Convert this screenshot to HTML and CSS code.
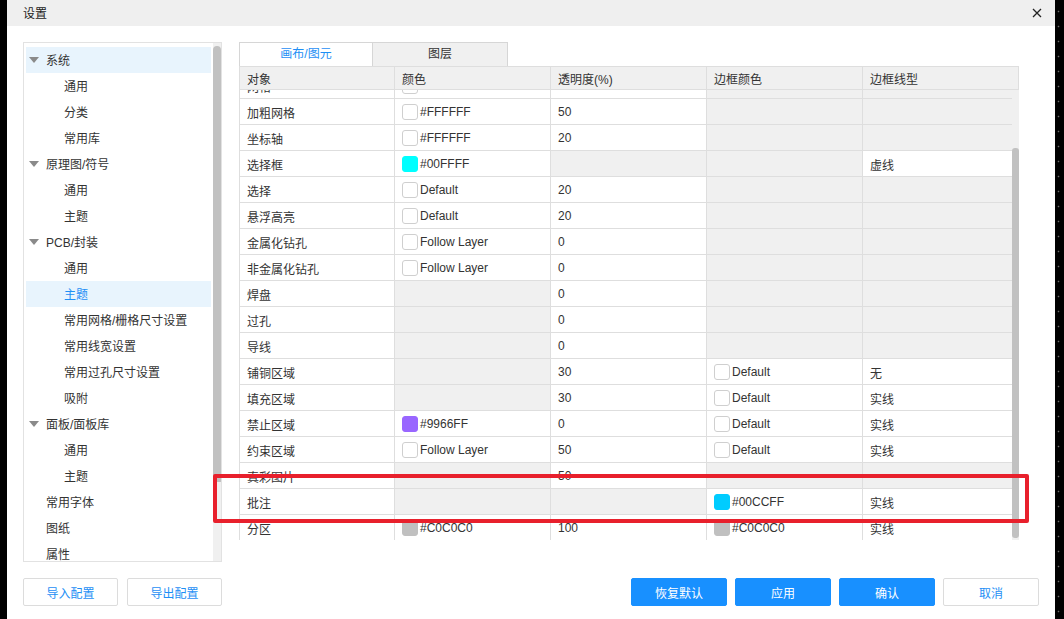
FILE: index.html
```html
<!DOCTYPE html>
<html lang="zh">
<head>
<meta charset="utf-8">
<title>设置</title>
<link rel="stylesheet" href="styles.css">
</head>
<body>
<div class="screen">
  <div class="dialog">
    <div class="titlebar">
      <span class="title">设置</span>
      <svg class="close" width="10" height="10" viewBox="0 0 10 10"><path d="M1 1L9 9M9 1L1 9" stroke="#222" stroke-width="1.3" fill="none"/></svg>
    </div>
    <div class="content">
      <div class="main">
        <div class="tree-panel">
          <div class="tree">
            <div class="node parent hover"><span class="tri"></span>系统</div>
            <div class="node child">通用</div>
            <div class="node child">分类</div>
            <div class="node child">常用库</div>
            <div class="node parent"><span class="tri"></span>原理图/符号</div>
            <div class="node child">通用</div>
            <div class="node child">主题</div>
            <div class="node parent"><span class="tri"></span>PCB/封装</div>
            <div class="node child">通用</div>
            <div class="node child selected">主题</div>
            <div class="node child">常用网格/栅格尺寸设置</div>
            <div class="node child">常用线宽设置</div>
            <div class="node child">常用过孔尺寸设置</div>
            <div class="node child">吸附</div>
            <div class="node parent"><span class="tri"></span>面板/面板库</div>
            <div class="node child">通用</div>
            <div class="node child">主题</div>
            <div class="node leaf">常用字体</div>
            <div class="node leaf">图纸</div>
            <div class="node leaf">属性</div>
          </div>
          <div class="vscroll tree-scroll"><div class="thumb"></div></div>
        </div>
        <div class="right">
          <div class="tabs">
            <div class="tab active">画布/图元</div>
            <div class="tab">图层</div>
          </div>
          <div class="grid">
            <div class="head row">
              <div class="cell">对象</div>
              <div class="cell">颜色</div>
              <div class="cell">透明度(%)</div>
              <div class="cell">边框颜色</div>
              <div class="cell">边框线型</div>
            </div>
            <div class="body">
              <div class="rows">
                <div class="inner">
                  <div class="row"><div class="cell">网格</div><div class="cell"><span class="sw"></span>#FFFFFF</div><div class="cell">70</div><div class="cell off"></div><div class="cell off"></div></div>
                  <div class="row"><div class="cell">加粗网格</div><div class="cell"><span class="sw"></span>#FFFFFF</div><div class="cell">50</div><div class="cell off"></div><div class="cell off"></div></div>
                  <div class="row"><div class="cell">坐标轴</div><div class="cell"><span class="sw"></span>#FFFFFF</div><div class="cell">20</div><div class="cell off"></div><div class="cell off"></div></div>
                  <div class="row"><div class="cell">选择框</div><div class="cell"><span class="sw cyan"></span>#00FFFF</div><div class="cell off"></div><div class="cell off"></div><div class="cell">虚线</div></div>
                  <div class="row"><div class="cell">选择</div><div class="cell"><span class="sw"></span>Default</div><div class="cell">20</div><div class="cell off"></div><div class="cell off"></div></div>
                  <div class="row"><div class="cell">悬浮高亮</div><div class="cell"><span class="sw"></span>Default</div><div class="cell">20</div><div class="cell off"></div><div class="cell off"></div></div>
                  <div class="row"><div class="cell">金属化钻孔</div><div class="cell"><span class="sw"></span>Follow Layer</div><div class="cell">0</div><div class="cell off"></div><div class="cell off"></div></div>
                  <div class="row"><div class="cell">非金属化钻孔</div><div class="cell"><span class="sw"></span>Follow Layer</div><div class="cell">0</div><div class="cell off"></div><div class="cell off"></div></div>
                  <div class="row"><div class="cell">焊盘</div><div class="cell off"></div><div class="cell">0</div><div class="cell off"></div><div class="cell off"></div></div>
                  <div class="row"><div class="cell">过孔</div><div class="cell off"></div><div class="cell">0</div><div class="cell off"></div><div class="cell off"></div></div>
                  <div class="row"><div class="cell">导线</div><div class="cell off"></div><div class="cell">0</div><div class="cell off"></div><div class="cell off"></div></div>
                  <div class="row"><div class="cell">铺铜区域</div><div class="cell off"></div><div class="cell">30</div><div class="cell"><span class="sw"></span>Default</div><div class="cell">无</div></div>
                  <div class="row"><div class="cell">填充区域</div><div class="cell off"></div><div class="cell">30</div><div class="cell"><span class="sw"></span>Default</div><div class="cell">实线</div></div>
                  <div class="row"><div class="cell">禁止区域</div><div class="cell"><span class="sw purple"></span>#9966FF</div><div class="cell">0</div><div class="cell"><span class="sw"></span>Default</div><div class="cell">实线</div></div>
                  <div class="row"><div class="cell">约束区域</div><div class="cell"><span class="sw"></span>Follow Layer</div><div class="cell">50</div><div class="cell"><span class="sw"></span>Default</div><div class="cell">实线</div></div>
                  <div class="row"><div class="cell">真彩图片</div><div class="cell off"></div><div class="cell">50</div><div class="cell off"></div><div class="cell off"></div></div>
                  <div class="row"><div class="cell">批注</div><div class="cell off"></div><div class="cell off"></div><div class="cell"><span class="sw sky"></span>#00CCFF</div><div class="cell">实线</div></div>
                  <div class="row"><div class="cell">分区</div><div class="cell"><span class="sw silver"></span>#C0C0C0</div><div class="cell">100</div><div class="cell"><span class="sw silver"></span>#C0C0C0</div><div class="cell">实线</div></div>
                </div>
              </div>
              <div class="vscroll grid-scroll"><div class="thumb"></div></div>
            </div>
          </div>
        </div>
      </div>
      <div class="footer">
        <div class="btns">
          <button class="btn">导入配置</button>
          <button class="btn">导出配置</button>
        </div>
        <div class="btns">
          <button class="btn primary">恢复默认</button>
          <button class="btn primary">应用</button>
          <button class="btn primary">确认</button>
          <button class="btn">取消</button>
        </div>
      </div>
    </div>
    <div class="highlight"></div>
  </div>
  <div class="edge"></div>
</div>
</body>
</html>
```

FILE: styles.css
```css
* { box-sizing: border-box; }
html, body { margin: 0; padding: 0; }
body {
  background: #000;
  font-family: "Liberation Sans", "Noto Sans CJK SC", sans-serif;
  font-size: 12px;
  color: #333;
}
.screen {
  display: flex;
  height: 619px;
  padding-left: 7px;
  overflow: hidden;
}
.dialog {
  position: relative;
  width: 1048px;
  height: 619px;
  background: #fff;
  display: flex;
  flex-direction: column;
}
.edge {
  flex: 1;
  background-color: #000;
  background-image: radial-gradient(circle, #6a6a6a 0.7px, transparent 1.1px);
  background-size: 9px 15px;
  background-position: -1px 4px;
}
.titlebar {
  height: 26px;
  background: #efefef;
  display: flex;
  align-items: center;
  justify-content: space-between;
  padding: 0 13px 0 16px;
  flex-shrink: 0;
}
.title { font-size: 12px; color: #222; padding-bottom: 1px; }
.close { display: block; }

.content {
  flex: 1;
  padding: 16px 16px 0 16px;
  display: flex;
  flex-direction: column;
}
.main {
  display: flex;
  gap: 17px;
  height: 520px;
}
.tree-panel {
  width: 199px;
  height: 520px;
  border: 1px solid #e2e2e2;
  display: flex;
  overflow: hidden;
}
.tree {
  flex: 1;
  padding: 4px 2px 0 2px;
  overflow: hidden;
}
.node {
  height: 26px;
  line-height: 26px;
  padding-top: 1px;
  display: flex;
  align-items: center;
  white-space: nowrap;
  color: #333;
}
.node.parent { padding-left: 3px; }
.node.child { padding-left: 38px; }
.node.leaf { padding-left: 20px; }
.node.hover, .node.selected { background: #e8f4fd; }
.node.selected { color: #1e8ff5; }
.tri {
  width: 0; height: 0;
  border-left: 5.5px solid transparent;
  border-right: 5.5px solid transparent;
  border-top: 6px solid #8a8a8a;
  margin-right: 7px;
  margin-top: -1px;
}
.vscroll {
  background: #f0f0f0;
  flex-shrink: 0;
}
.tree-scroll { width: 8px; padding-top: 3px; }
.tree-scroll .thumb {
  height: 436px;
  background: #c1c1c1;
  border-radius: 4px 4px 0 0;
}

.right {
  flex: 1;
  display: flex;
  flex-direction: column;
}
.tabs { display: flex; height: 24px; }
.tab {
  width: 134px;
  height: 24px;
  line-height: 23px;
  text-align: center;
  border: 1px solid #d6d6d6;
  border-bottom: none;
  background: #f0f0f0;
  color: #333;
}
.tab + .tab { border-left: none; width: 135px; }
.tab.active { background: #fff; color: #1e8ff5; }

.grid { width: 780px; }
.row {
  display: grid;
  grid-template-columns: 155px 156px 156px 156px 156px;
  height: 26px;
}
.head.row {
  height: 24px;
  background: #f0f0f0;
  border: 1px solid #dedede;
  border-right: none;
  grid-template-columns: 155px 156px 156px 156px 156px;
}
.head .cell {
  border-bottom: none;
  background: transparent;
  padding-top: 0;
}
.cell {
  border-right: 1px solid #dedede;
  border-bottom: 1px solid #dedede;
  padding-left: 7px;
  padding-top: 1px;
  display: flex;
  align-items: center;
  white-space: nowrap;
  overflow: hidden;
  background: #fff;
}
.cell.off { background: #f0f0f0; }
.body {
  display: flex;
  height: 450px;
  border-left: 1px solid #dedede;
}
.rows {
  width: 772px;
  height: 450px;
  overflow: hidden;
}
.rows .row { grid-template-columns: 155px 156px 156px 156px 149px; }
.rows .row .cell:last-child { border-right: none; }
.inner { margin-top: -17px; }
.grid-scroll {
  width: 7px;
  padding-top: 58px;
}
.grid-scroll .thumb {
  height: 390px;
  background: #c1c1c1;
  border-radius: 3px;
}
.sw {
  width: 16px;
  height: 16px;
  border: 1px solid #cfcfcf;
  border-radius: 3px;
  background: #fff;
  margin-right: 2px;
  margin-top: -1px;
  flex-shrink: 0;
}
.sw.cyan { background: #00ffff; border-color: #00ffff; }
.sw.purple { background: #9966ff; border-color: #9966ff; }
.sw.sky { background: #00ccff; border-color: #00ccff; }
.sw.silver { background: #c0c0c0; border-color: #c0c0c0; }

.footer {
  display: flex;
  justify-content: space-between;
  margin-top: 16px;
}
.btns { display: flex; gap: 8px; }
.btns:first-child { gap: 9px; }
.btn {
  width: 96px;
  height: 28px;
  border: 1px solid #dcdcdc;
  border-radius: 2px;
  background: #fff;
  color: #1e8ff5;
  font-family: "Liberation Sans", "Noto Sans CJK SC", sans-serif;
  font-size: 12px;
  padding: 0;
}
.btns:first-child .btn { width: 95px; }
.btn.primary {
  background: #1890ff;
  border-color: #1890ff;
  color: #fff;
}
.highlight {
  position: absolute;
  left: 206px;
  top: 474px;
  width: 816px;
  height: 49px;
  border: 4px solid #e8202c;
  border-radius: 2px;
  pointer-events: none;
}
```
